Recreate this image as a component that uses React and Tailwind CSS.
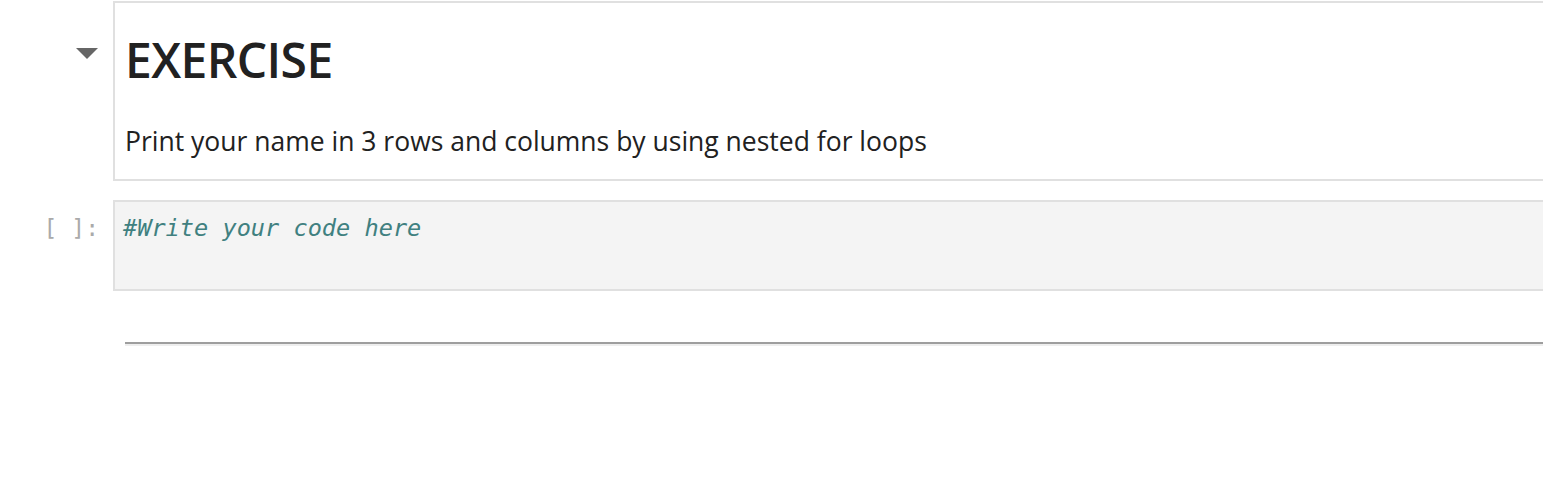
export default function App() {
  return (
    <div className="w-[1543px] h-[489px] bg-white overflow-hidden pt-px" style={{ fontFamily: '"Open Sans", "Noto Sans", sans-serif' }}>
      {/* markdown cell */}
      <div className="flex">
        <div className="w-[113px] shrink-0 flex justify-end pr-[15px] pt-[47px]">
          <svg width="22" height="12" viewBox="0 0 22 12">
            <polygon points="0,0 22,0 11,11" fill="#666" />
          </svg>
        </div>
        <div className="flex-1 border-2 border-r-0 border-[#e0e0e0] pl-[10px] pt-[26px] pb-[20px] text-[#212121]">
          <h1 className="text-[48px] leading-[62px] font-semibold tracking-[-0.6px]">EXERCISE</h1>
          <p className="mt-[32px] text-[26.5px] leading-[36px]">Print your name in 3 rows and columns by using nested for loops</p>
        </div>
      </div>

      {/* code cell */}
      <div className="flex mt-[19px]">
        <div className="w-[113px] shrink-0 text-right pr-[14px] pt-[13px] text-[23px] leading-[30px] text-[#aaaaaa]" style={{ fontFamily: '"DejaVu Sans Mono", monospace' }}>
          [ ]:
        </div>
        <div className="flex-1 h-[91px] border-2 border-r-0 border-[#e0e0e0] bg-[#f4f4f4] pl-[8px] pt-[11px]">
          <div className="text-[23.6px] leading-[30px] italic text-[#408080]" style={{ fontFamily: '"DejaVu Sans Mono", monospace' }}>
            #Write your code here
          </div>
        </div>
      </div>

      {/* rule */}
      <div className="ml-[125px] mt-[51px] border-t-2 border-[#9e9e9e] border-b-2 border-b-[#eeeeee]" />
    </div>
  );
}
